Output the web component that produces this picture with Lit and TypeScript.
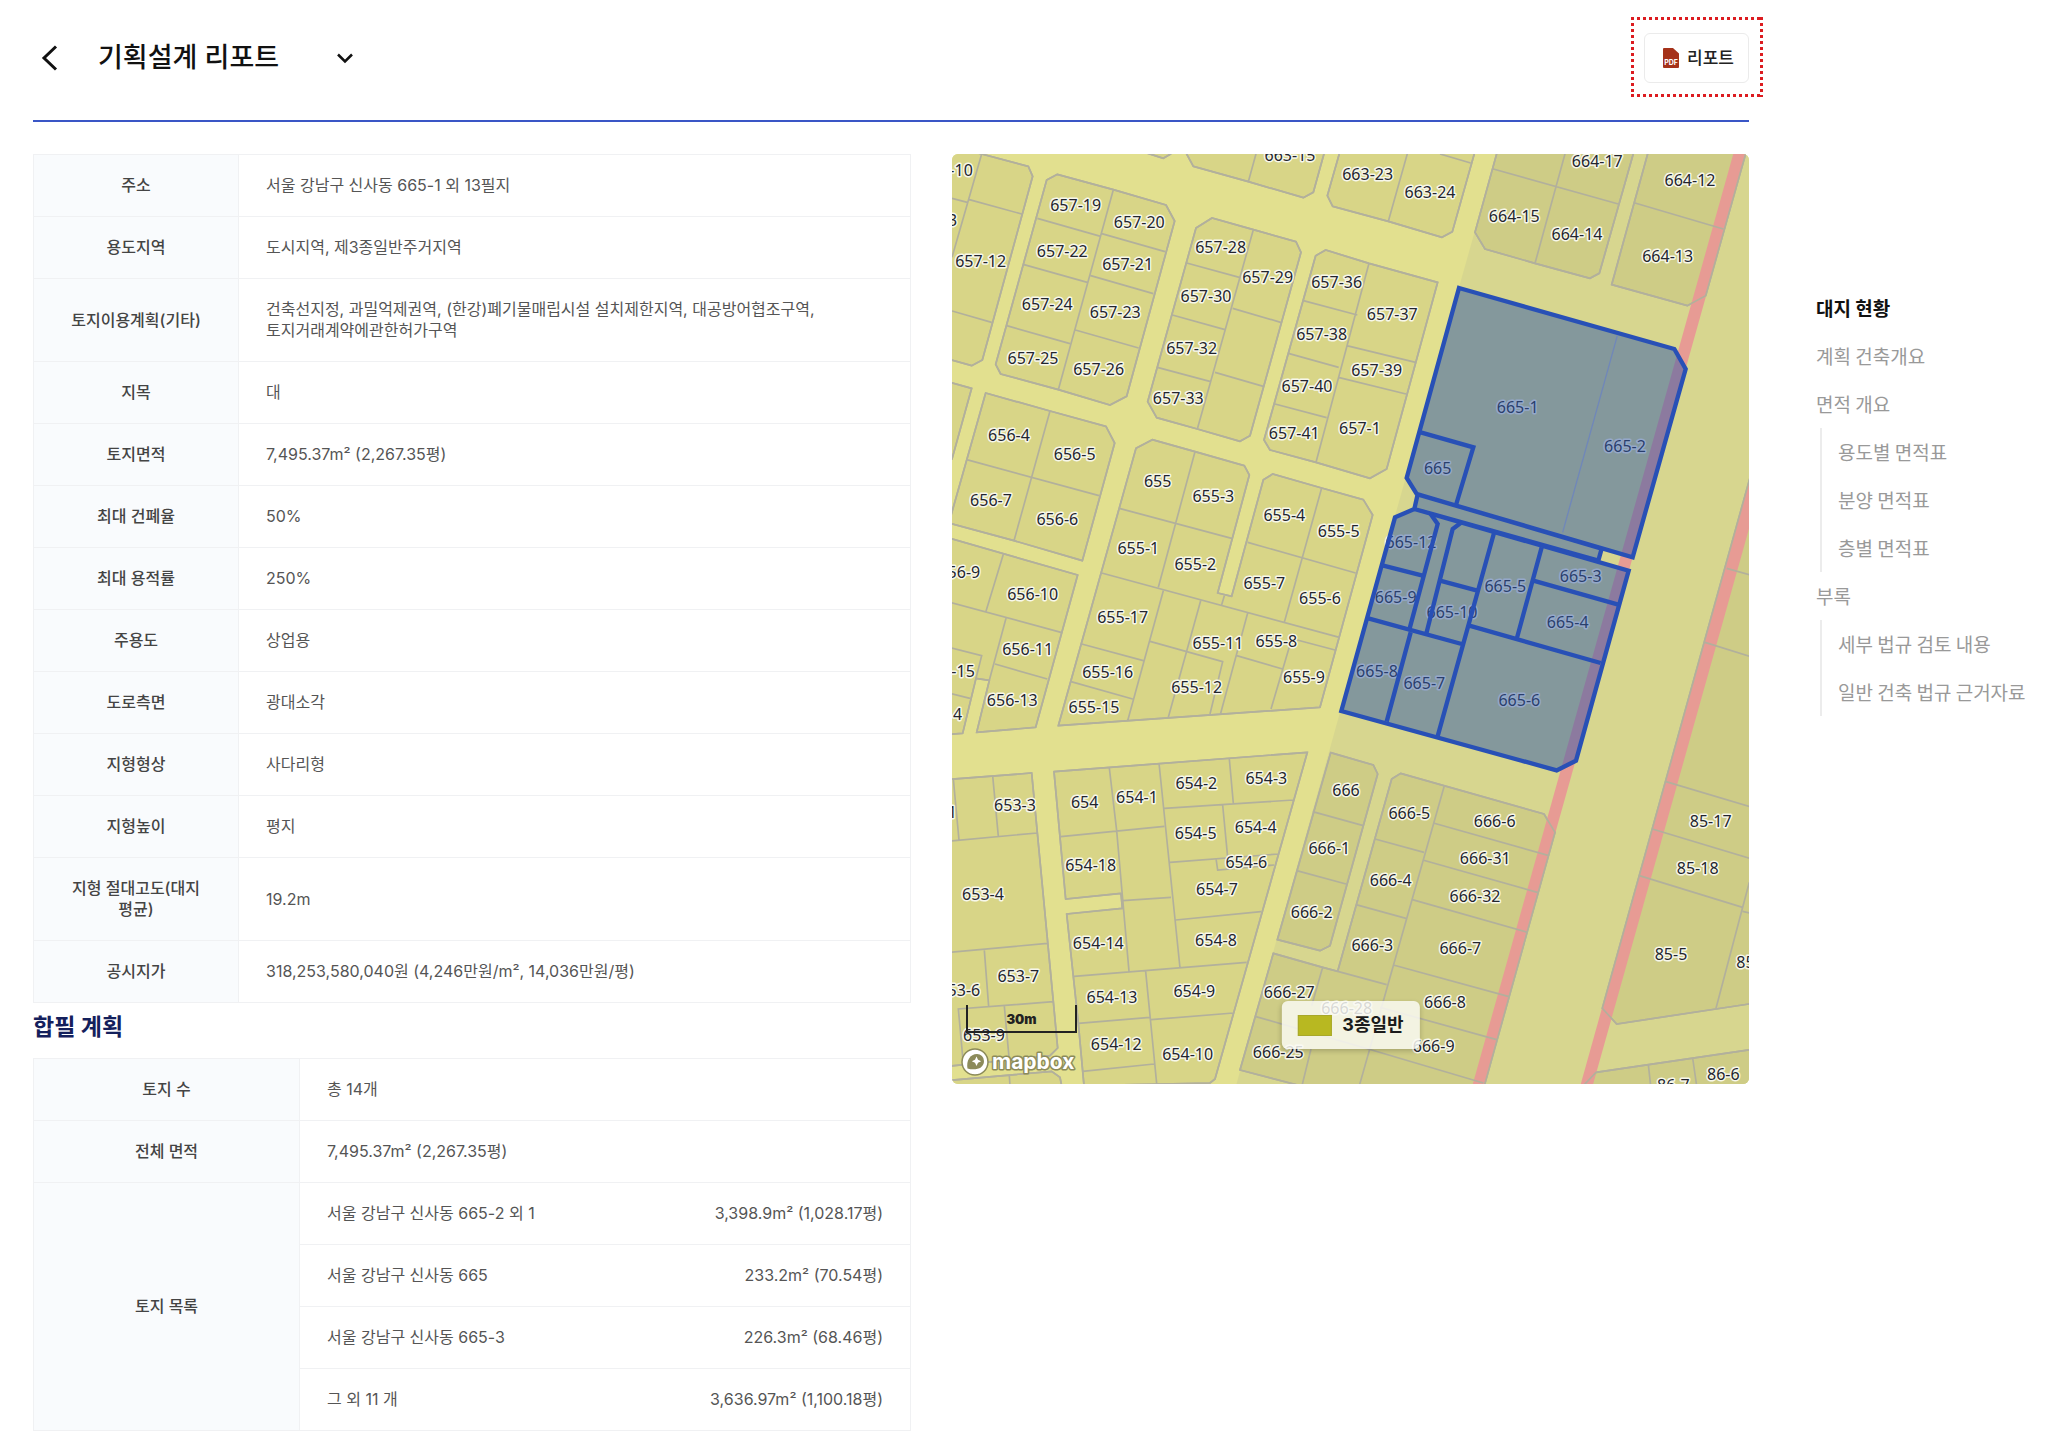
import { LitElement, html, svg, css } from "lit";
import { customElement } from "lit/decorators.js";
import { classMap } from "lit/directives/class-map.js";

/* Parcel geometry: one block outline plus the lot lines that divide it. */
interface Block {
  outline: string;
  lines: string;
}

/* Blocks on the residential streets west of the zoning boundary. */
const WEST_BLOCKS: Block[] = [
  {
    outline: "M0 0L40 0L95 15L235 52L248 82L97 633L65 650L0 632Z",
    lines: "M95 15L6 325M6 148L52 160M58 152L215 195M6 486L125 520",
  },
  {
    outline: "M290 93L322 76L490 122L648 168L674 216L530 742L480 768L325 722L152 675L137 646Z",
    lines:
      "M490 122L325 722M262 208L452 262M455 254L645 308M222 347L412 400M422 380L610 434M170 530L360 584M376 543L566 597",
  },
  {
    outline: "M738 237L786 207L910 242L1038 278L1053 310L900 860L870 877L742 840L620 806L593 758Z",
    lines: "M910 242L742 840M710 342L868 385M848 478L992 520M667 498L825 542M795 670L940 712M622 655L782 698",
  },
  {
    outline: "M1097 320L1127 303L1257 343L1463 400L1310 960L1260 988L1098 940L960 903L942 873Z",
    lines: "M1257 343L1098 940M1060 455L1222 498M1015 613L1166 655M975 765L1130 806M1190 590L1397 640M1165 685L1368 735",
  },
  { outline: "M590 12L640 28L662 15L662 0L590 0Z", lines: "" },
  { outline: "M710 0L710 15L730 52L895 98L1060 146L1090 130L1126 0Z", lines: "M922 0L895 98" },
  {
    outline: "M1172 0L1132 140L1148 172L1315 217L1476 265L1507 248L1577 0Z",
    lines: "M1376 0L1315 217M1470 15L1562 42",
  },
  { outline: "M0 700L65 718L6 930L0 930Z", lines: "" },
  {
    outline: "M107 732L300 786L468 832L494 882L397 1235L192 1175L0 1123L0 1110Z",
    lines: "M300 786L192 1175M50 932L447 1040",
  },
  {
    outline: "M0 1168L383 1278L257 1735L80 1750L118 1594L78 1588L38 1753L0 1756Z",
    lines:
      "M160 1216L108 1387M0 1360L333 1450M168 1408L118 1594M135 1545L292 1590M0 1496L95 1520L78 1588M0 1633L60 1648",
  },
  {
    outline:
      "M558 898L607 872L735 908L883 950L898 978L803 1332L845 1342L940 992L968 975L1115 1017L1240 1052L1268 1098L1110 1675L325 1730Z",
    lines:
      "M735 908L625 1315M508 1078L845 1168M455 1272L1168 1465M823 1340L815 1367M1115 1017L1003 1420M893 1180L1217 1272M640 1325L533 1715M752 1355L655 1705M893 1392L812 1693M600 1477L818 1538L780 1695M395 1485L580 1535M363 1598L548 1650M860 1520L998 1560M1025 1470L963 1680M1030 1470L1155 1503",
  },
  {
    outline:
      "M312 1868L1072 1810L795 2790L780 2802L402 2810L385 2623L350 2295L517 2278L513 2233L347 2250Z",
    lines:
      "M332 2063L643 2032M478 1857L500 2045L537 2467M627 1842L690 2457M838 1830L850 1963M643 1978L1030 1953M818 1968L833 2125M660 2140L985 2115M798 2128L803 2163L972 2148M518 2255L663 2245M677 2313L933 2288M372 2482L890 2440M587 2467L620 2803M385 2623L600 2605M603 2612L850 2592M398 2767L612 2745",
  },
  {
    outline: "M0 1891L245 1872L310 2558L323 2697L300 2720L0 2751Z",
    lines:
      "M10 1890L27 2073M128 1880L145 2062M0 2076L262 2052M0 2410L292 2383M103 2404L116 2573M40 2745L25 2580L310 2558M163 2572L178 2735",
  },
  { outline: "M0 2794L305 2767L330 2785L335 2810L0 2810Z", lines: "M178 2780L180 2810" },
];

/* Blocks along the arterial road east of the zoning boundary. */
const EAST_BLOCKS: Block[] = [
  { outline: "M1644 0L1575 250L1605 300L1755 343L1920 388L1948 373L2054 0Z", lines: "M1849 0L1755 343M1630 60L2005 165" },
  { outline: "M2097 0L1985 407L2212 470L2267 440L2391 0Z", lines: "M2055 162L2320 240" },
  {
    outline: "M1142 1811L1270 1848L1283 1875L1140 2390L1110 2405L982 2372Z",
    lines: "M1088 1988L1240 2030M1040 2165L1188 2205",
  },
  {
    outline:
      "M1325 1890L1352 1873L1782 1995L1815 2050L1603 2810L1050 2810L870 2763L970 2413L1118 2455L1163 2467Z",
    lines:
      "M1483 1910L1228 2810M1275 2070L1422 2110M1218 2267L1368 2308M1163 2467L1310 2507M1450 2022L1797 2120M1418 2133L1762 2230M1387 2252L1732 2350M1330 2448L1677 2543M1290 2575L1640 2672M1255 2700L1600 2802M1118 2455L1085 2570M1083 2700L1056 2810M915 2602L1255 2700",
  },
  {
    outline: "M2410 950L1957 2578L2000 2625L2410 2563Z",
    lines:
      "M2330 1258L2400 1278M2265 1480L2400 1522M2148 1898L2400 1973M2107 2040L2400 2128M2068 2180L2378 2275M2398 2200L2378 2275L2298 2578M2378 2287L2400 2292",
  },
  { outline: "M1900 2810L1938 2770L2410 2701L2410 2810Z", lines: "M2095 2747L2102 2810M2228 2727L2240 2810" },
];

type Label = [text: string, x: number, y: number];

const LABELS: Label[] = [
  ["657-10", -8, 65], ["657-13", -55, 215], ["657-12", 92, 336], ["657-19", 377, 169], ["657-20", 568, 219],
  ["657-22", 337, 306], ["657-21", 533, 345], ["657-24", 292, 467], ["657-23", 496, 489], ["657-25", 249, 628],
  ["657-26", 446, 660], ["657-28", 812, 296], ["657-29", 953, 384], ["657-30", 768, 443], ["657-32", 725, 599],
  ["657-33", 685, 748], ["657-36", 1160, 400], ["657-37", 1327, 495], ["657-38", 1115, 555], ["657-39", 1280, 663],
  ["657-40", 1071, 711], ["657-41", 1033, 853], ["657-1", 1230, 838], ["663-15", 1020, 20], ["663-23", 1253, 77],
  ["663-24", 1440, 130], ["664-17", 1942, 38], ["664-15", 1693, 201], ["664-14", 1881, 255], ["664-12", 2220, 93],
  ["664-13", 2153, 323], ["656-4", 177, 859], ["656-5", 374, 915], ["656-7", 123, 1054], ["656-6", 322, 1111],
  ["656-9", 28, 1271], ["656-10", 248, 1335], ["656-11", 233, 1501], ["656-15", -2, 1567], ["656-13", 187, 1655],
  ["656-14", -40, 1695], ["655", 623, 996], ["655-3", 790, 1041], ["655-4", 1003, 1098], ["655-5", 1166, 1147],
  ["655-1", 565, 1199], ["655-2", 736, 1247], ["655-7", 943, 1303], ["655-6", 1110, 1347], ["655-17", 518, 1406],
  ["655-11", 804, 1482], ["655-8", 979, 1476], ["655-16", 473, 1569], ["655-12", 740, 1615], ["655-9", 1062, 1584],
  ["655-15", 432, 1675], ["654-2", 739, 1904], ["654-3", 949, 1887], ["654", 404, 1959], ["654-1", 561, 1946],
  ["653-3", 195, 1968], ["653-1", -42, 1989], ["654-5", 737, 2054], ["654-4", 917, 2036], ["654-18", 422, 2150],
  ["654-6", 889, 2140], ["654-7", 801, 2221], ["653-4", 99, 2236], ["654-14", 445, 2382], ["654-8", 798, 2373],
  ["653-7", 205, 2481], ["653-6", 28, 2525], ["654-13", 486, 2546], ["654-9", 733, 2526], ["653-9", 102, 2660],
  ["654-12", 499, 2687], ["654-10", 713, 2717], ["666", 1188, 1923], ["666-1", 1138, 2099], ["666-2", 1085, 2289],
  ["666-27", 1018, 2529], ["666-28", 1190, 2577], ["666-25", 985, 2709], ["666-5", 1378, 1992], ["666-6", 1634, 2016],
  ["666-31", 1606, 2128], ["666-4", 1322, 2193], ["666-32", 1575, 2243], ["666-3", 1267, 2388], ["666-7", 1531, 2399],
  ["666-8", 1485, 2561], ["666-9", 1451, 2691], ["85-17", 2282, 2016], ["85-18", 2243, 2158], ["85-5", 2163, 2416],
  ["85-6", 2408, 2440], ["86-7", 2170, 2808], ["86-6", 2320, 2777], ["665-1", 1703, 774], ["665-2", 2025, 891],
  ["665", 1463, 959], ["665-12", 1383, 1180], ["665-3", 1892, 1281], ["665-5", 1666, 1312], ["665-9", 1337, 1346],
  ["665-10", 1506, 1391], ["665-4", 1853, 1421], ["665-8", 1281, 1566], ["665-7", 1423, 1604], ["665-6", 1708, 1654],
];

/* The merged site: three touching outlines and the lot borders inside them. */
const SITE_OUTLINE =
  "M1527 417L2173 600L2207 660L2048 1225L1400 1035L1370 987Z" +
  "M1403 1036L1393 1080L1945 1235L1955 1199Z" +
  "M1393 1080L1335 1105L1174 1686L1820 1864L1878 1835L2036 1265Z";
const SITE_LOTS =
  "M1412 850L1570 895L1518 1068M1300 1250L1418 1280M1255 1408L1535 1485M1442 1095L1463 1125L1378 1442" +
  "M1535 1120L1508 1140L1430 1450M1632 1152L1462 1765M1470 1295L1582 1325M1775 1195L1700 1470" +
  "M1558 1430L1952 1542M1750 1295L2005 1367M1382 1450L1310 1718";

@customElement("parcel-map")
export class ParcelMap extends LitElement {
  static styles = css`
    :host {
      display: block;
      position: relative;
      border-radius: 6px;
      overflow: hidden;
    }
    .map {
      display: block;
      width: 100%;
      height: auto;
      background: #e2e08f;
    }
    .east-zone { fill: #d7d68f; }
    .block { stroke: #b2b09c; stroke-width: 5; stroke-linejoin: round; }
    .west { fill: #d8d587; }
    .east { fill: #cecc86; }
    .road-line { fill: #e79b94; }
    .lot-line { fill: none; stroke: #b2b09c; stroke-width: 5; }
    .label {
      font: 48px "Noto Sans", "Open Sans", sans-serif;
      fill: #23252e;
      stroke: #f7f7ea;
      stroke-width: 9;
      stroke-linejoin: round;
      paint-order: stroke;
      text-anchor: middle;
    }
    .site { fill: rgba(50, 90, 170, 0.5); stroke: #2850b6; stroke-width: 13; }
    .site-lots { fill: none; stroke: #2850b6; stroke-width: 13; }
    .site-faint { fill: none; stroke: #7087b9; stroke-width: 4; }
    .legend {
      position: absolute;
      left: 50%;
      bottom: 35px;
      transform: translateX(-50%);
      display: flex;
      align-items: center;
      gap: 11px;
      height: 48px;
      padding: 0 16px;
      box-sizing: border-box;
      white-space: nowrap;
      border-radius: 6px;
      background: rgba(250, 250, 244, 0.84);
      box-shadow: 0 2px 5px rgba(0, 0, 0, 0.2);
      font: 700 18px/24px "Inter", "Noto Sans CJK KR", sans-serif;
      color: #1b1b1b;
    }
    .swatch {
      width: 34px;
      height: 21px;
      box-sizing: border-box;
      background: #b8b821;
      border: 1px solid #a8a82a;
    }
    .scale {
      position: absolute;
      left: 14px;
      bottom: 51px;
      width: 111px;
      height: 28px;
      box-sizing: border-box;
      border: 2px solid #222;
      border-top: 0;
      text-align: center;
      font: 900 13px/28px "Inter", sans-serif;
      color: #222;
    }
    .brand {
      position: absolute;
      left: 8px;
      bottom: 6px;
      width: 120px;
      height: 32px;
    }
    .brand-name {
      font: 700 21px "Inter", sans-serif;
      fill: #fff;
      stroke: #8c8b5a;
      stroke-width: 3;
      stroke-linejoin: round;
      paint-order: stroke;
    }
  `;

  private renderBlock(block: Block, tone: string) {
    return svg`<path class="block ${tone}" d=${block.outline}></path>`;
  }

  private renderLines(block: Block) {
    return svg`<path class="lot-line" d=${block.outline + block.lines}></path>`;
  }

  render() {
    return html`
      <svg class="map" viewBox="6 15 2391 2790" role="img" aria-label="지적도">
        <path class="east-zone" d="M1644 0L1527 415L1170 1690L858 2810L2410 2810L2410 0Z"></path>
        ${WEST_BLOCKS.map((b) => this.renderBlock(b, "west"))}
        ${EAST_BLOCKS.map((b) => this.renderBlock(b, "east"))}
        <path class="road-line" d="M2354 0L2392 0L1603 2810L1567 2810Z"></path>
        <path class="road-line" d="M2410 950L2410 1093L1928 2810L1891 2810Z"></path>
        ${WEST_BLOCKS.map((b) => this.renderLines(b))} ${EAST_BLOCKS.map((b) => this.renderLines(b))}
        ${LABELS.map(([text, x, y]) => svg`<text class="label" x=${x} y=${y + 17}>${text}</text>`)}
        <path class="site" d=${SITE_OUTLINE}></path>
        <path class="site-faint" d="M2002 560L1838 1150"></path>
        <path class="site-lots" d=${SITE_LOTS}></path>
      </svg>
      <div class="scale">30m</div>
      <svg class="brand" viewBox="0 0 120 32" role="img" aria-label="mapbox">
        <circle cx="15" cy="16" r="13" fill="#fff" stroke="#8c8b5a" stroke-width="1.5"></circle>
        <path d="M7.5 22.5C6 15 10 8 17 8a7 7 0 0 1 7 7c0 7-8 10-16.500 7.500z" fill="#8c8b5a"></path>
        <path d="M16.500 10.500l1.500 3.200 3.200 1.500-3.200 1.500-1.500 3.200-1.500-3.200-3.200-1.500 3.200-1.500z" fill="#fff"></path>
        <text class="brand-name" x="32" y="23">mapbox</text>
      </svg>
      <div class="legend"><span class="swatch"></span>3종일반</div>
    `;
  }
}

const SITE_ROWS: [string, string][] = [
  ["주소", "서울 강남구 신사동 665-1 외 13필지"],
  ["용도지역", "도시지역, 제3종일반주거지역"],
  [
    "토지이용계획(기타)",
    "건축선지정, 과밀억제권역, (한강)폐기물매립시설 설치제한지역, 대공방어협조구역, 토지거래계약에관한허가구역",
  ],
  ["지목", "대"],
  ["토지면적", "7,495.37m² (2,267.35평)"],
  ["최대 건폐율", "50%"],
  ["최대 용적률", "250%"],
  ["주용도", "상업용"],
  ["도로측면", "광대소각"],
  ["지형형상", "사다리형"],
  ["지형높이", "평지"],
  ["지형 절대고도(대지 평균)", "19.2m"],
  ["공시지가", "318,253,580,040원 (4,246만원/m², 14,036만원/평)"],
];

const LOT_ROWS: [string, string][] = [
  ["서울 강남구 신사동 665-2 외 1", "3,398.9m² (1,028.17평)"],
  ["서울 강남구 신사동 665", "233.2m² (70.54평)"],
  ["서울 강남구 신사동 665-3", "226.3m² (68.46평)"],
  ["그 외 11 개", "3,636.97m² (1,100.18평)"],
];

interface Section {
  title: string;
  active?: boolean;
  children?: string[];
}

const SECTIONS: Section[] = [
  { title: "대지 현황", active: true },
  { title: "계획 건축개요" },
  { title: "면적 개요", children: ["용도별 면적표", "분양 면적표", "층별 면적표"] },
  { title: "부록", children: ["세부 법규 검토 내용", "일반 건축 법규 근거자료"] },
];

@customElement("app-root")
export class AppRoot extends LitElement {
  static styles = css`
    :host {
      display: block;
      min-height: 100vh;
      background: #fff;
      color: #555;
      font: 16px/21px "Inter", "Noto Sans CJK KR", sans-serif;
      word-break: keep-all;
    }
    .page {
      display: grid;
      grid-template-columns: minmax(0, 1fr) 232px;
      column-gap: 67px;
      padding-left: 33px;
    }
    .header {
      display: flex;
      align-items: center;
      padding: 33px 0 37px;
      border-bottom: 2px solid #3a56c6;
    }
    .icon-button {
      display: flex;
      padding: 0;
      border: 0;
      background: none;
      color: #111;
      cursor: pointer;
    }
    .title {
      margin: 0 52px 0 32px;
      font-size: 27px;
      line-height: 40px;
      font-weight: 500;
      color: #111;
    }
    .export {
      position: relative;
      margin-left: auto;
    }
    .export-button {
      display: flex;
      align-items: center;
      justify-content: center;
      gap: 7px;
      width: 105px;
      height: 50px;
      padding: 0 0 0 3px;
      border: 1px solid #ebebeb;
      border-radius: 6px;
      background: #fff;
      color: #222;
      font: 500 17px/24px "Inter", "Noto Sans CJK KR", sans-serif;
      cursor: pointer;
    }
    .export-frame {
      position: absolute;
      top: -16px;
      left: -13px;
      width: 132px;
      height: 80px;
      pointer-events: none;
    }
    .pdf-text {
      font: 700 7px "Inter", sans-serif;
      fill: #fff;
      text-anchor: middle;
    }
    .content {
      display: grid;
      grid-template-columns: minmax(0, 878fr) minmax(0, 797fr);
      column-gap: 41px;
      align-items: start;
      padding: 32px 0 11px;
    }
    .table {
      width: 100%;
      border-collapse: separate;
      border-spacing: 0;
      table-layout: fixed;
      border-top: 1px solid #f0f1f3;
      border-left: 1px solid #f0f1f3;
    }
    .table th,
    .table td {
      padding: 20px 27px;
      border-right: 1px solid #f0f1f3;
      border-bottom: 1px solid #f0f1f3;
      vertical-align: middle;
    }
    .table th {
      background: #f9fbfd;
      color: #444;
      font-weight: 500;
      text-align: center;
    }
    .table .lot-name { border-right: 0; }
    .table .lot-area { text-align: right; }
    .label-column { width: 205px; }
    .wide-label-column { width: 266px; }
    .subtitle {
      margin: 0 0 7px;
      font-size: 23px;
      line-height: 48px;
      font-weight: 700;
      color: #14205c;
    }
    .contents {
      padding-top: 284px;
      font: 19px/48px "Noto Sans CJK KR", sans-serif;
      white-space: nowrap;
    }
    .section-list,
    .subsection-list {
      margin: 0;
      padding: 0;
      list-style: none;
    }
    .subsection-list {
      margin-left: 4px;
      padding-left: 16px;
      border-left: 2px solid #ececec;
    }
    .link {
      display: block;
      color: #999;
      text-decoration: none;
    }
    .link.active {
      color: #111;
      font-weight: 700;
    }
  `;

  private renderSection(section: Section) {
    return html`<li>
      <a href="#" class=${classMap({ link: true, active: !!section.active })}>${section.title}</a>
      ${section.children
        ? html`<ul class="subsection-list">
            ${section.children.map((name) => html`<li><a class="link" href="#">${name}</a></li>`)}
          </ul>`
        : null}
    </li>`;
  }

  render() {
    return html`
      <div class="page">
        <main>
          <header class="header">
            <button class="icon-button" aria-label="뒤로">
              <svg width="33" height="34" viewBox="0 0 33 34" fill="none" stroke="currentColor" stroke-width="3">
                <path d="M23 5.500L11 17l12 11.500"></path>
              </svg>
            </button>
            <h1 class="title">기획설계 리포트</h1>
            <button class="icon-button" aria-label="리포트 선택">
              <svg width="28" height="28" viewBox="0 0 28 28" fill="none" stroke="currentColor" stroke-width="2.500">
                <path d="M7 10.500l7 7 7-7"></path>
              </svg>
            </button>
            <div class="export">
              <button class="export-button">
                <svg width="18" height="22" viewBox="0 0 18 22" aria-hidden="true">
                  <path d="M2 1h9l6 5.500V20a1 1 0 0 1-1 1H2a1 1 0 0 1-1-1V2a1 1 0 0 1 1-1z" fill="#a5321a"></path>
                  <text class="pdf-text" x="9" y="18">PDF</text>
                </svg>
                리포트
              </button>
              <svg class="export-frame" viewBox="0 0 132 80" fill="none" stroke="#dc1c20" aria-hidden="true">
                <path d="M0 1.500h132M0 78.500h132M1.500 0v80M130.500 0v80" stroke-width="3" stroke-dasharray="3 3"></path>
              </svg>
            </div>
          </header>
          <div class="content">
            <section>
              <table class="table">
                <colgroup><col class="label-column" /><col /></colgroup>
                <tbody>
                  ${SITE_ROWS.map(([name, value]) => html`<tr><th scope="row">${name}</th><td>${value}</td></tr>`)}
                </tbody>
              </table>
              <h2 class="subtitle">합필 계획</h2>
              <table class="table">
                <colgroup><col class="wide-label-column" /><col /><col /></colgroup>
                <tbody>
                  <tr><th scope="row">토지 수</th><td colspan="2">총 14개</td></tr>
                  <tr><th scope="row">전체 면적</th><td colspan="2">7,495.37m² (2,267.35평)</td></tr>
                  ${LOT_ROWS.map(
                    ([name, area], i) => html`<tr>
                      ${i === 0 ? html`<th scope="rowgroup" rowspan=${LOT_ROWS.length}>토지 목록</th>` : null}
                      <td class="lot-name">${name}</td>
                      <td class="lot-area">${area}</td>
                    </tr>`
                  )}
                </tbody>
              </table>
            </section>
            <parcel-map></parcel-map>
          </div>
        </main>
        <nav class="contents" aria-label="목차">
          <ul class="section-list">
            ${SECTIONS.map((section) => this.renderSection(section))}
          </ul>
        </nav>
      </div>
    `;
  }
}
